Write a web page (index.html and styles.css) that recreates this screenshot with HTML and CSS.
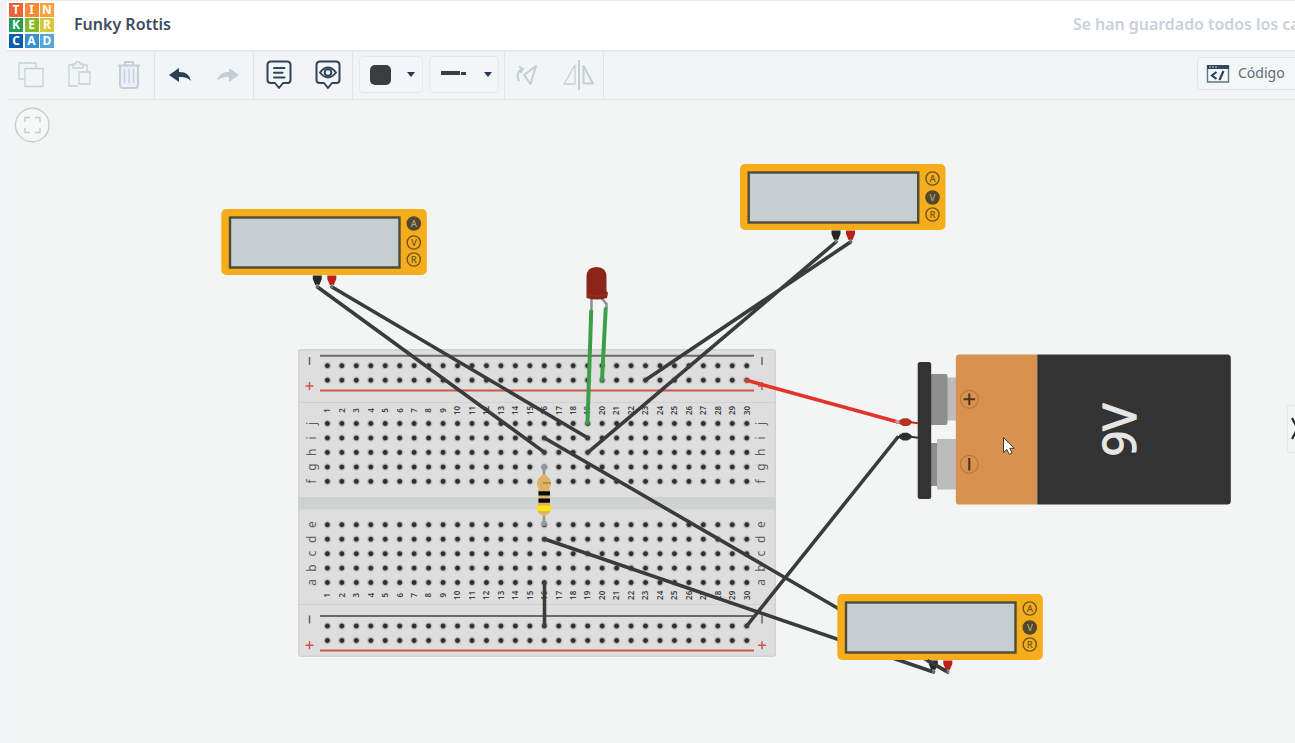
FILE: index.html
```html
<!DOCTYPE html>
<html lang="es">
<head>
<meta charset="utf-8">
<title>Funky Rottis</title>
<link rel="stylesheet" href="styles.css">
</head>
<body>
<div class="app">
  <header class="header">
    <div class="logo">
      <span class="t1">T</span><span class="t2">I</span><span class="t3">N</span>
      <span class="t4">K</span><span class="t5">E</span><span class="t6">R</span>
      <span class="t7">C</span><span class="t8">A</span><span class="t9">D</span>
    </div>
    <h1 class="title">Funky Rottis</h1>
    <span class="saved">Se han guardado todos los cambios</span>
  </header>

  <nav class="toolbar">
    <div class="group edit">
      <svg class="icon pale" width="28" height="30" viewBox="0 0 28 30"><path d="M8 19H2V3h17v5M8 8.500h18v18H8z"/></svg>
      <svg class="icon pale" width="26" height="30" viewBox="0 0 26 30"><path d="M12.500 26H3V5h4M17 5h4v6M7 4h3V2h4v2h3v4H7zM13 12h11v12H13z"/></svg>
      <svg class="icon pale trash" width="26" height="32" viewBox="0 0 26 32"><path class="bin" d="M4 7h18v20q0 2-2 2H6q-2 0-2-2z"/><path class="thick" d="M2 6.500h22M9 6V3h8v3M4 7v19q0 3 3 3h12q3 0 3-3V7"/><path d="M8.500 10v14M13 10v14M17.500 10v14"/></svg>
    </div>
    <div class="group history">
      <svg class="dark" width="24" height="20" viewBox="0 0 24 20"><path d="M1 10L11 3v4q10-.5 12 9-4-4.500-12-4v5z"/></svg>
      <svg class="faded" width="24" height="20" viewBox="0 0 24 20"><path d="M23 10L13 3v4Q3 6.500 1 16q4-4.500 12-4v5z"/></svg>
    </div>
    <div class="group notes">
      <svg class="icon ink" width="28" height="32" viewBox="0 0 28 32"><path d="M6 2.500h16q3.500 0 3.500 3.500v15q0 3-3 3H18L14 29l-4-5H6q-3.500 0-3.500-3V6q0-3.500 3.500-3.500zM9 9h10.500M9 13.700h8.500M9 18.500h10.500"/></svg>
      <svg class="icon ink" width="28" height="32" viewBox="0 0 28 32"><path d="M6 2.500h16q3.500 0 3.500 3.500v15q0 3-3 3H18L14 29l-4-5H6q-3.500 0-3.500-3V6q0-3.500 3.500-3.500z"/><path d="M6 13.500q8-10 16 0-8 10-16 0z"/><circle cx="14" cy="13.500" r="3.300"/></svg>
    </div>
    <div class="group pickers">
      <button class="picker color"><span class="swatch"></span><span class="caret"></span></button>
      <button class="picker wire"><span class="dash"></span><span class="dot"></span><span class="caret"></span></button>
    </div>
    <div class="group transform">
      <svg class="icon pale" width="24" height="26" viewBox="0 0 24 26"><path class="thick" d="M21 4L9 13l6.500 9zM4 19Q0 9 8 7M4 4.500L8 7 5.500 11"/></svg>
      <svg class="icon pale" width="32" height="32" viewBox="0 0 32 32"><path d="M12 6v19H1z"/><path class="thick" d="M16 1v30M20.500 7v17.500H30z"/></svg>
    </div>
    <button class="code">
      <svg width="24" height="20" viewBox="0 0 24 20"><path class="frame" d="M1.500 2h21v16h-21z"/><path class="bar" d="M1 1h22v4H1z"/><path class="lights" d="M3 3h2M6 3h2M9 3h2"/><path class="tag" d="M10.500 8L6 11.500l4.500 3.500M17.500 7l-4 9"/></svg>
      <span>Código</span>
    </button>
  </nav>

  <main class="stage">
    <svg class="circuit" width="1295" height="643" viewBox="0 100 1295 643">
      <defs>
        <radialGradient id="hole"><stop offset="0" stop-color="#282828"/><stop offset=".45" stop-color="#353535"/><stop offset=".65" stop-color="#999" stop-opacity=".65"/><stop offset="1" stop-color="#bbb" stop-opacity="0"/></radialGradient>
        <g id="meter">
          <rect width="205.500" height="66" rx="5" fill="#f5ad1b"/>
          <rect x="8.700" y="8.500" width="169.500" height="50" fill="#c5ced0" stroke="#504b39" stroke-width="2.400"/>
        </g>
        <g id="probes">
          <path d="M91.500 66.500h9v3.500l-2.500 6h-4l-2.500-6z" fill="#252626"/>
          <path d="M106 66.500h9v3.500l-2.500 6h-4l-2.500-6z" fill="#bd2018"/>
          <path d="M96 75v4M110.500 75v4" stroke="#777" stroke-width="2.500"/>
        </g>
      </defs>

      <g class="board">
        <rect x="298" y="349" width="478" height="308" rx="3" fill="#d1d2d3"/>
        <rect x="299.500" y="350.500" width="475" height="305" rx="2" fill="#dededf"/>
        <rect x="299" y="497" width="476" height="12.500" fill="#d0d1d1"/>
        <path d="M299 402.500h476M299 604.500h476" stroke="#cfd0d1" stroke-width="1.200"/>
        <path d="M320 355.700h434M320 616h434" stroke="#696b6b" stroke-width="2"/>
        <path d="M320 390.500h434M320 650.600h434" stroke="#d0544c" stroke-width="2"/>
        <g id="holes"></g>
        <g id="labels"></g>
      </g>

      <g class="resistor">
        <path d="M544 467v16M544 508v16" stroke="#92969b" stroke-width="2.600" stroke-linecap="round"/>
        <circle cx="544" cy="467" r="2.700" fill="#92969b"/><circle cx="544" cy="523.500" r="2.700" fill="#92969b"/>
        <path d="M543 474.500h2q6.500 4 6 10l-1.500 4v15l1.500 4q0 6-7 9-7-3-7-9l1.500-4v-15l-1.500-4q-.5-6 6-10z" fill="#dfb269"/>
        <path d="M543 483h8" stroke="#9a7c4a" stroke-width="1.300"/>
        <path d="M538.500 493.300h11.500M538.500 500.700h11.500" stroke="#0c0a08" stroke-width="4.200"/>
        <path d="M537 508.300h14" stroke="#ffe408" stroke-width="5.500"/>
      </g>

      <g class="led">
        <path d="M591.500 298v11M601.500 298l5 6v4" fill="none" stroke="#8c8e8f" stroke-width="2.500"/>
        <path d="M586.500 277q0-10 10-10t10 10v14l1.500 2-1 5q-10 3-20.500 0z" fill="#8b251a"/>
        <path d="M587 294q10 4 20 0" fill="none" stroke="#9d3026" stroke-width="1"/>
      </g>

      <g class="wires">
        <path d="M317.500 287L544.500 452.400M332 287L588 438M836 242L588 452.400M850.500 242L645.500 380M544.500 438L947.500 672M544.500 539L933.500 672M544.500 582.500V626M746.700 626L897.500 437.500"/>
        <path class="red" d="M746.700 380.300L898 422"/>
        <path class="green" d="M591.200 311L587.500 423M605.700 309L602 380"/>
      </g>

      <g transform="translate(221.300 209)"><use href="#meter"/><use href="#probes"/>
        <g class="keys"><circle class="on" cx="192.500" cy="14.500" r="6.600"/><text class="lit" x="192.500" y="18">A</text><circle cx="192.500" cy="33.500" r="6.600"/><text x="192.500" y="37">V</text><circle cx="192.500" cy="50.500" r="6.600"/><text x="192.500" y="54">R</text></g></g>
      <g transform="translate(740 164)"><use href="#meter"/><use href="#probes"/>
        <g class="keys"><circle cx="192.500" cy="14.500" r="6.600"/><text x="192.500" y="18">A</text><circle class="on" cx="192.500" cy="33.500" r="6.600"/><text class="lit" x="192.500" y="37">V</text><circle cx="192.500" cy="50.500" r="6.600"/><text x="192.500" y="54">R</text></g></g>
      <g transform="translate(837.300 594)"><use href="#meter"/><use href="#probes"/>
        <g class="keys"><circle cx="192.500" cy="14.500" r="6.600"/><text x="192.500" y="18">A</text><circle class="on" cx="192.500" cy="33.500" r="6.600"/><text class="lit" x="192.500" y="37">V</text><circle cx="192.500" cy="50.500" r="6.600"/><text x="192.500" y="54">R</text></g></g>
      <path d="M927.500 660.500L946 671" stroke="#3a3b3b" stroke-width="3.200"/>

      <g class="battery">
        <path d="M945 377.500h13v43h-13z" fill="#bcbcbc"/>
        <rect x="930" y="374" width="17.500" height="51" rx="2" fill="#8d8d8d"/>
        <rect x="930" y="443" width="10" height="43" fill="#8d8d8d"/>
        <path d="M937 439h21v50.500h-21z" fill="#bcbcbc"/>
        <rect x="917.700" y="362" width="13.500" height="137" rx="2.500" fill="#323332"/>
        <path d="M1037.500 354.500h-78.500q-3.200 0-3.200 3.500v143q0 3.500 3.200 3.500h78.500z" fill="#d7924f"/>
        <path d="M1037.300 354.500h190q3.500 0 3.500 3.500v143q0 3.500-3.500 3.500h-190z" fill="#323332"/>
        <g fill="none" stroke="#bb7939" stroke-width="1.200"><circle cx="969.300" cy="399.300" r="9"/><circle cx="969.300" cy="464.300" r="9"/></g>
        <path d="M963.500 399.300h11.600M969.300 393.500v11.600M969.300 458v12.500" stroke="#4b3219" stroke-width="2"/>
        <text class="volts" transform="translate(1136 456.500) rotate(-90)" textLength="53" lengthAdjust="spacingAndGlyphs">9V</text>
        <path d="M896 421.500l5 .5M909 422l9 1.200" stroke="#b92f24" stroke-width="2"/>
        <path d="M899 420.500l4-2.200h4.500q3 1 5 3.700-2 3-5 4H903l-4-2.500z" fill="#b92f24"/>
        <path d="M897 437.500l4-1M909 436.500l9 1.200" stroke="#323332" stroke-width="2"/>
        <path d="M899 435l4-2.200h4.500q3 1 5 3.700-2 3-5 4H903l-4-2.500z" fill="#2e2f2f"/>
        <path d="M895.500 421l4 1" stroke="#b7a7a4" stroke-width="3"/>
      </g>

      <path d="M1003.500 437.500v15.200l3.400-3.200 2.300 4.900 2.900-1.400-2.300-4.700h4.400z" fill="#fff" stroke="#4c3626" stroke-width="1"/>
      <g class="fit"><circle cx="32.300" cy="125" r="16.800"/><path d="M25 122v-4.500h5M35 117.500h5v4.500M40 128v4.500h-5M30 132.500h-5V128"/></g>
    </svg>
    <div class="drawer"><svg width="8" height="24" viewBox="0 0 8 24"><path d="M1 1l5.500 10.500L1 22"/></svg></div>
  </main>
</div>
<script src="board.js"></script>
</body>
</html>
```
FILE: styles.css
```css
* { box-sizing: border-box; }
body { margin: 0; background: #f0f4f7; font-family: "Noto Sans", sans-serif; overflow: hidden; }
.app { width: 1295px; height: 743px; display: flex; flex-direction: column; overflow: hidden; }
.header { height: 50px; margin-left: 7px; padding-bottom: 3px; flex: none; display: flex; align-items: center; background: #fff; border-top: 1px solid #e9ebec; overflow: hidden; white-space: nowrap; }
.logo { display: grid; grid-template-columns: repeat(3, 14px); grid-auto-rows: 14px; gap: 1.500px; margin: 2px 0 0 2px; }
.logo span { color: #fff; font-size: 12px; font-weight: 700; line-height: 14px; text-align: center; }
.t1 { background: #ee6235; } .t2 { background: #f58a38; } .t3 { background: #f5a23d; }
.t4 { background: #249b59; } .t5 { background: #88b927; } .t6 { background: #d9c63a; }
.t7 { background: #075fab; } .t8 { background: #3690cf; } .t9 { background: #53a6d9; }
.title { margin: 0 0 0 20px; width: 98px; font-size: 16px; font-weight: 600; color: #3b4c5f; }
.saved { margin-left: 902px; font-size: 16px; font-weight: 600; color: #c9d1da; letter-spacing: -.05px; }
.toolbar { height: 50px; margin-left: 7px; flex: none; display: flex; background: #f2f5f5; border-top: 2px solid #e6e9e9; border-bottom: 1px solid #e3e7e8; }
.group { display: flex; align-items: center; border-right: 1px solid #e1e5e7; padding-bottom: 2px; flex: none; }
.edit { width: 148px; padding-left: 10px; gap: 21px; }
.trash { margin-left: 3px; }
.history { width: 99px; padding-left: 13px; gap: 24px; }
.notes { width: 99px; padding-left: 11px; gap: 21px; }
.pickers { width: 152px; padding-left: 6px; gap: 6px; }
.transform { width: 99px; padding-left: 10px; gap: 24px; }
.icon { fill: none; stroke-width: 1.300; stroke-linejoin: round; }
.pale { stroke: #c5ced8; }
.ink { stroke: #2f4458; stroke-width: 2; stroke-linecap: round; }
.thick { stroke-width: 2; }
.bin { fill: #e9f0f7; stroke: none; }
.dark { fill: #2b4156; }
.faded { fill: #c3ced6; }
.picker { height: 37px; display: flex; align-items: center; padding: 0; background: #f3f6f6; border: 1px solid #e6e9ea; border-radius: 4px; }
.color { width: 64px; padding-left: 10px; gap: 16px; }
.wire { width: 70px; padding-left: 11px; }
.swatch { width: 21px; height: 20px; border-radius: 5px; background: #3a3d3d; }
.dash { width: 19px; height: 4px; margin-top: -3px; background: #3a3d3d; }
.dot { width: 5px; height: 3px; margin: -3px 18px 0 1px; background: #3a3d3d; }
.caret { border: 4px solid transparent; border-top: 5px solid #203a55; border-bottom: 0; }
.code { width: 110px; height: 33px; margin: 5px 0 0 auto; transform: translateX(12px); display: flex; align-items: center; gap: 8px; padding: 0 0 0 8px; border: 1px solid #e3e7e8; border-radius: 4px; background: #f4f7f7; color: #5f6b75; font: 14px "Noto Sans", sans-serif; }
.code span { margin-top: -3px; }
.code path { fill: none; }
.frame { stroke: #647382; stroke-width: 1.400; }
.code .bar { fill: #2f4860; }
.lights { stroke: #c8d1d8; stroke-width: 1; }
.tag { stroke: #2d4257; stroke-width: 2.200; }
.stage { height: 643px; margin-left: 7px; position: relative; background: #f3f5f5; overflow: hidden; }
.circuit { display: block; margin-left: -7px; }
.drawer { position: absolute; right: 0; top: 305px; width: 8px; height: 48px; display: flex; align-items: center; border: 1px solid #e6e9e9; border-right: 0; padding-left: 3px; overflow: hidden; }
.drawer svg { flex: none; }
.drawer path { fill: none; stroke: #252b2e; stroke-width: 2.200; }
.wires path { fill: none; stroke: #3a3b3b; stroke-width: 3.600; stroke-linecap: round; stroke-linejoin: round; }
.wires .red { stroke: #e23528; }
.wires .green { stroke: #3c9e49; stroke-width: 4; }
.keys circle { fill: none; stroke: #6d5522; stroke-width: 1.400; }
.keys .on { fill: #51482f; stroke: #51482f; }
.keys text { fill: #6d5522; font-size: 9.500px; font-weight: 500; text-anchor: middle; }
.keys .lit { fill: #b6a67f; }
.volts { fill: #e6e6e6; stroke: #e6e6e6; stroke-width: 1.200; stroke-linejoin: round; font-size: 46px; }
.num { fill: #3f4142; font-size: 8px; font-weight: 600; text-anchor: middle; }
.row { fill: #595b5c; font-size: 12px; text-anchor: middle; }
.minus, .plus { fill: none; stroke: #5f6263; stroke-width: 1.500; }
.plus { stroke: #d15049; }
.fit { fill: none; stroke: #c6cacd; stroke-width: 1.400; }
.fit circle { fill: #f6f8f8; }
```
FILE: board.js
```js
const NS = 'http://www.w3.org/2000/svg';
const add = (parent, name, attrs, text) => {
  const el = document.createElementNS(NS, name);
  for (const key in attrs) el.setAttribute(key, attrs[key]);
  if (text) el.textContent = text;
  parent.appendChild(el);
};
const holes = document.getElementById('holes');
const labels = document.getElementById('labels');
const rows = { j: 423.5, i: 438, h: 452.4, g: 467, f: 481.4, e: 524.7, d: 539.2, c: 553.7, b: 568.1, a: 582.5 };
const ys = [365.7, 380.2, ...Object.values(rows), 626, 640.5];

for (let n = 1; n <= 30; n++) {
  const x = 327.4 + (n - 1) * 14.46;
  ys.forEach(y => add(holes, 'circle', { cx: x, cy: y, r: 4.4, fill: 'url(#hole)' }));
  [410.5, 595.3].forEach(y =>
    add(labels, 'text', { class: 'num', transform: `translate(${x + 2.8} ${y}) rotate(-90)` }, String(n)));
}
for (const [letter, y] of Object.entries(rows)) {
  [315.5, 765].forEach(x =>
    add(labels, 'text', { class: 'row', transform: `translate(${x} ${y}) rotate(-90)` }, letter));
}
for (const x of [309.5, 762]) {
  [361, 619.5].forEach(y => add(labels, 'path', { class: 'minus', d: `M${x} ${y - 4}v8` }));
  [386, 645.3].forEach(y => add(labels, 'path', { class: 'plus', d: `M${x - 4} ${y}h8M${x} ${y - 4}v8` }));
}
```
